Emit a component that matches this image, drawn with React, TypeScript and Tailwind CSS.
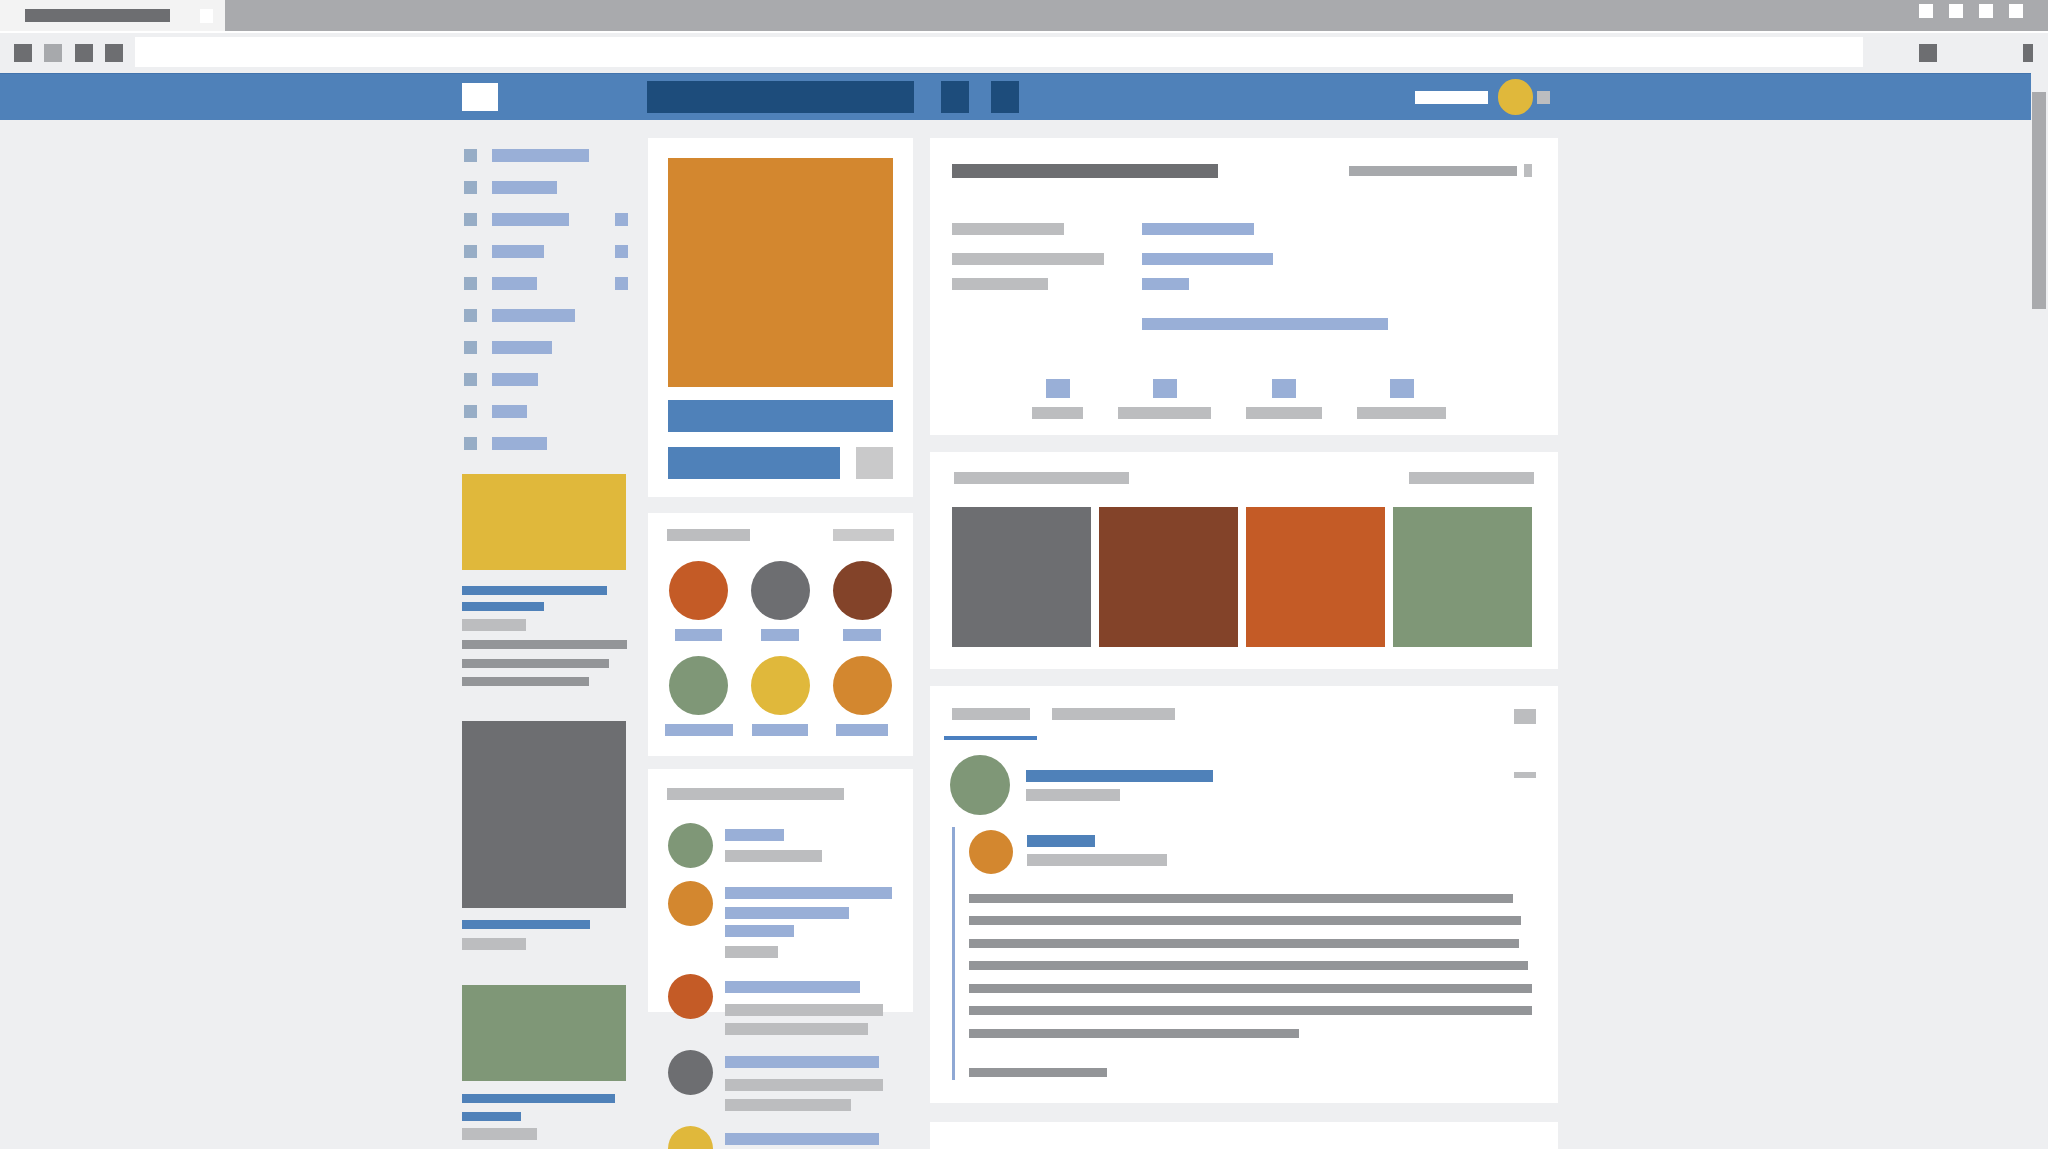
import React from "react";

// NOTE - left menu rows: bar width + whether the row has a counter square
const menu = [
  { w: "w-[97px]", extra: false },
  { w: "w-[65px]", extra: false },
  { w: "w-[77px]", extra: true },
  { w: "w-[52px]", extra: true },
  { w: "w-[45px]", extra: true },
  { w: "w-[83px]", extra: false },
  { w: "w-[60px]", extra: false },
  { w: "w-[46px]", extra: false },
  { w: "w-[35px]", extra: false },
  { w: "w-[55px]", extra: false },
];

const sideBlocks = [
  "mt-[24px] h-[96px] w-[164px] bg-[#e0b83b]",
  "mt-[16px] h-[9px] w-[145px] bg-[#4f81b9]",
  "mt-[7px] h-[9px] w-[82px] bg-[#4f81b9]",
  "mt-[8px] h-[12px] w-[64px] bg-[#bcbdbf]",
  "mt-[9px] h-[9px] w-[165px] bg-[#939598]",
  "mt-[10px] h-[9px] w-[147px] bg-[#939598]",
  "mt-[9px] h-[9px] w-[127px] bg-[#939598]",
  "mt-[35px] h-[187px] w-[164px] bg-[#6d6e71]",
  "mt-[12px] h-[9px] w-[128px] bg-[#4f81b9]",
  "mt-[9px] h-[12px] w-[64px] bg-[#bcbdbf]",
  "mt-[35px] h-[96px] w-[164px] bg-[#7f9777]",
  "mt-[13px] h-[9px] w-[153px] bg-[#4f81b9]",
  "mt-[9px] h-[9px] w-[59px] bg-[#4f81b9]",
  "mt-[7px] h-[12px] w-[75px] bg-[#bcbdbf]",
];

const friends = [
  { c: "bg-[#c45b26]", w: "w-[47px]" },
  { c: "bg-[#6d6e71]", w: "w-[38px]" },
  { c: "bg-[#834329]", w: "w-[38px]" },
  { c: "bg-[#7f9777]", w: "w-[68px]" },
  { c: "bg-[#e0b83b]", w: "w-[56px]" },
  { c: "bg-[#d3872f]", w: "w-[52px]" },
];

const contacts = [
  {
    c: "bg-[#7f9777]",
    mt: "mt-[23px]",
    bars: ["mt-[6px] w-[59px] bg-[#99afd7]", "mt-[9px] w-[97px] bg-[#bcbdbf]"],
  },
  {
    c: "bg-[#d3872f]",
    mt: "mt-[13px]",
    bars: [
      "mt-[6px] w-[167px] bg-[#99afd7]",
      "mt-[8px] w-[124px] bg-[#99afd7]",
      "mt-[6px] w-[69px] bg-[#99afd7]",
      "mt-[9px] w-[53px] bg-[#bcbdbf]",
    ],
  },
  {
    c: "bg-[#c45b26]",
    mt: "mt-[16px]",
    bars: [
      "mt-[7px] w-[135px] bg-[#99afd7]",
      "mt-[11px] w-[158px] bg-[#bcbdbf]",
      "mt-[7px] w-[143px] bg-[#bcbdbf]",
    ],
  },
  {
    c: "bg-[#6d6e71]",
    mt: "mt-[15px]",
    bars: [
      "mt-[6px] w-[154px] bg-[#99afd7]",
      "mt-[11px] w-[158px] bg-[#bcbdbf]",
      "mt-[8px] w-[126px] bg-[#bcbdbf]",
    ],
  },
  { c: "bg-[#e0b83b]", mt: "mt-[15px]", bars: ["mt-[7px] w-[154px] bg-[#99afd7]"] },
];

const infoRows = [
  { mt: "mt-[45px]", grey: "w-[112px]", blue: "w-[112px]" },
  { mt: "mt-[18px]", grey: "w-[152px]", blue: "w-[131px]" },
  { mt: "mt-[13px]", grey: "w-[96px]", blue: "w-[47px]" },
  { mt: "mt-[28px]", grey: "", blue: "w-[246px]" },
];

const counters = ["w-[51px]", "w-[93px]", "w-[76px]", "w-[89px]"];

const photos = ["bg-[#6d6e71]", "bg-[#834329]", "bg-[#c45b26]", "bg-[#7f9777]"];

const postLines = [
  "mt-[20px] w-[544px]",
  "mt-[13px] w-[552px]",
  "mt-[14px] w-[550px]",
  "mt-[13px] w-[559px]",
  "mt-[14px] w-[563px]",
  "mt-[13px] w-[563px]",
  "mt-[14px] w-[330px]",
];

const App = () => {
  return (
    <div className="h-[1149px] w-[2048px] overflow-hidden bg-[#eeeff1]">
      {/* tab strip */}
      <div className="flex h-[31px] bg-[#a9aaad]">
        <div className="flex w-[225px] items-center bg-[#f3f3f3] pl-[25px]">
          <div className="h-[13px] w-[145px] bg-[#6d6e71]" />
          <div className="ml-[30px] h-[14px] w-[13px] bg-white" />
        </div>
        <div className="ml-auto flex items-start gap-[16px] pr-[25px] pt-[4px]">
          <div className="h-[14px] w-[14px] bg-white" />
          <div className="h-[14px] w-[14px] bg-white" />
          <div className="h-[14px] w-[14px] bg-white" />
          <div className="h-[14px] w-[14px] bg-white" />
        </div>
      </div>
      <div className="h-[2px] bg-white" />

      {/* toolbar */}
      <div className="flex h-[40px] items-start pl-[14px]">
        <div className="mt-[11px] h-[18px] w-[18px] bg-[#6d6e71]" />
        <div className="ml-[12px] mt-[11px] h-[18px] w-[18px] bg-[#a7a9ac]" />
        <div className="ml-[13px] mt-[11px] h-[18px] w-[18px] bg-[#6d6e71]" />
        <div className="ml-[12px] mt-[11px] h-[18px] w-[18px] bg-[#6d6e71]" />
        <div className="ml-[12px] mt-[4px] h-[30px] w-[1728px] bg-white" />
        <div className="ml-[56px] mt-[11px] h-[18px] w-[18px] bg-[#6d6e71]" />
        <div className="ml-[86px] mt-[11px] h-[18px] w-[10px] bg-[#6d6e71]" />
      </div>

      <div className="flex">
        <div className="w-[2031px]">
          {/* blue header */}
          <div className="flex h-[47px] items-center border-t border-[#4374ad] bg-[#4f81b9] pl-[462px]">
            <div className="h-[28px] w-[36px] bg-white" />
            <div className="ml-[149px] h-[32px] w-[267px] bg-[#1d4c7b]" />
            <div className="ml-[27px] h-[32px] w-[28px] bg-[#1d4c7b]" />
            <div className="ml-[22px] h-[32px] w-[28px] bg-[#1d4c7b]" />
            <div className="ml-[396px] h-[13px] w-[73px] bg-white" />
            <div className="ml-[10px] h-[36px] w-[35px] rounded-full bg-[#e0b83b]" />
            <div className="ml-[4px] h-[13px] w-[13px] bg-[#bcbdbf]" />
          </div>

          {/* page body */}
          <div className="flex items-start pl-[462px] pt-[18px]">
            {/* left column */}
            <div className="flex w-[166px] flex-col pt-[11px]">
              <div className="flex flex-col gap-[19px]">
                {menu.map((m, i) => (
                  <div key={i} className="flex h-[13px] items-center pl-[2px]">
                    <div className="h-[13px] w-[13px] bg-[#97adc6]" />
                    <div className={`ml-[15px] h-[13px] ${m.w} bg-[#99afd7]`} />
                    {m.extra && <div className="ml-auto h-[13px] w-[13px] bg-[#99afd7]" />}
                  </div>
                ))}
              </div>
              {sideBlocks.map((b, i) => (
                <div key={i} className={b} />
              ))}
            </div>

            {/* center column */}
            <div className="ml-[20px] flex w-[265px] flex-col">
              <div className="bg-white px-[20px] pb-[18px] pt-[20px]">
                <div className="h-[229px] w-full bg-[#d3872f]" />
                <div className="mt-[13px] h-[32px] w-full bg-[#4f81b9]" />
                <div className="mt-[15px] flex justify-between">
                  <div className="h-[32px] w-[172px] bg-[#4f81b9]" />
                  <div className="h-[32px] w-[37px] bg-[#c9c9ca]" />
                </div>
              </div>

              <div className="mt-[16px] bg-white pb-[20px] pt-[16px]">
                <div className="flex justify-between px-[19px]">
                  <div className="h-[12px] w-[83px] bg-[#bcbdbf]" />
                  <div className="h-[12px] w-[61px] bg-[#c9c9ca]" />
                </div>
                <div className="mt-[20px] grid grid-cols-3 gap-y-[15px] px-[10px]">
                  {friends.map((f, i) => (
                    <div key={i} className="flex flex-col items-center">
                      <div className={`h-[59px] w-[59px] rounded-full ${f.c}`} />
                      <div className={`mt-[9px] h-[12px] ${f.w} bg-[#99afd7]`} />
                    </div>
                  ))}
                </div>
              </div>

              <div className="mt-[13px] h-[243px] bg-white pt-[19px]">
                <div className="ml-[19px] h-[12px] w-[177px] bg-[#bcbdbf]" />
                {contacts.map((c, i) => (
                  <div key={i} className={`flex items-start pl-[20px] ${c.mt}`}>
                    <div className={`h-[45px] w-[45px] shrink-0 rounded-full ${c.c}`} />
                    <div className="ml-[12px] flex flex-col">
                      {c.bars.map((b, j) => (
                        <div key={j} className={`h-[12px] ${b}`} />
                      ))}
                    </div>
                  </div>
                ))}
              </div>
            </div>

            {/* right column */}
            <div className="ml-[17px] flex w-[628px] flex-col">
              {/* profile info */}
              <div className="h-[297px] bg-white pl-[22px] pr-[26px] pt-[26px]">
                <div className="flex items-start justify-between">
                  <div className="h-[14px] w-[266px] bg-[#6d6e71]" />
                  <div className="flex items-start gap-[7px]">
                    <div className="mt-[2px] h-[10px] w-[168px] bg-[#a7a9ac]" />
                    <div className="h-[13px] w-[8px] bg-[#bcbdbf]" />
                  </div>
                </div>
                {infoRows.map((r, i) => (
                  <div key={i} className={`flex ${r.mt}`}>
                    <div className="w-[190px]">
                      {r.grey && <div className={`h-[12px] ${r.grey} bg-[#bcbdbf]`} />}
                    </div>
                    <div className={`h-[12px] ${r.blue} bg-[#99afd7]`} />
                  </div>
                ))}
                <div className="mt-[49px] flex gap-[35px] pl-[80px]">
                  {counters.map((w, i) => (
                    <div key={i} className="flex flex-col items-center">
                      <div className="h-[19px] w-[24px] bg-[#99afd7]" />
                      <div className={`mt-[9px] h-[12px] ${w} bg-[#bcbdbf]`} />
                    </div>
                  ))}
                </div>
              </div>

              {/* photos */}
              <div className="mt-[17px] h-[217px] bg-white px-[22px] pt-[20px]">
                <div className="flex justify-between px-[2px]">
                  <div className="h-[12px] w-[175px] bg-[#bcbdbf]" />
                  <div className="h-[12px] w-[125px] bg-[#bcbdbf]" />
                </div>
                <div className="mt-[23px] flex gap-[8px]">
                  {photos.map((p, i) => (
                    <div key={i} className={`h-[140px] w-[139px] ${p}`} />
                  ))}
                </div>
              </div>

              {/* wall post */}
              <div className="mt-[17px] h-[417px] bg-white pt-[22px]">
                <div className="flex h-[12px] items-start justify-between px-[22px]">
                  <div className="flex gap-[22px]">
                    <div className="h-[12px] w-[78px] bg-[#bcbdbf]" />
                    <div className="h-[12px] w-[123px] bg-[#bcbdbf]" />
                  </div>
                  <div className="mt-[1px] h-[15px] w-[22px] bg-[#bcbdbf]" />
                </div>
                <div className="ml-[14px] mt-[16px] h-[4px] w-[93px] bg-[#4a7fc0]" />
                <div className="mt-[15px] flex items-start pl-[20px] pr-[22px]">
                  <div className="h-[60px] w-[60px] shrink-0 rounded-full bg-[#7f9777]" />
                  <div className="ml-[16px] pt-[15px]">
                    <div className="h-[12px] w-[187px] bg-[#4f81b9]" />
                    <div className="mt-[7px] h-[12px] w-[94px] bg-[#bcbdbf]" />
                  </div>
                  <div className="ml-auto mt-[17px] h-[6px] w-[22px] bg-[#bcbdbf]" />
                </div>
                <div className="ml-[22px] mr-[26px] mt-[12px] border-l-[3px] border-[#8fa8d4] pb-[3px] pl-[14px] pt-[3px]">
                  <div className="flex items-start">
                    <div className="h-[44px] w-[44px] shrink-0 rounded-full bg-[#d3872f]" />
                    <div className="ml-[14px] pt-[5px]">
                      <div className="h-[12px] w-[68px] bg-[#4f81b9]" />
                      <div className="mt-[7px] h-[12px] w-[140px] bg-[#bcbdbf]" />
                    </div>
                  </div>
                  {postLines.map((l, i) => (
                    <div key={i} className={`h-[9px] ${l} bg-[#939598]`} />
                  ))}
                  <div className="mt-[30px] h-[9px] w-[138px] bg-[#939598]" />
                </div>
              </div>

              <div className="mt-[19px] h-[200px] bg-white" />
            </div>
          </div>
        </div>

        {/* scrollbar */}
        <div className="w-[17px] pl-[1px] pt-[19px]">
          <div className="h-[217px] w-[14px] bg-[#a9aaad]" />
        </div>
      </div>
    </div>
  );
};

export default App;
